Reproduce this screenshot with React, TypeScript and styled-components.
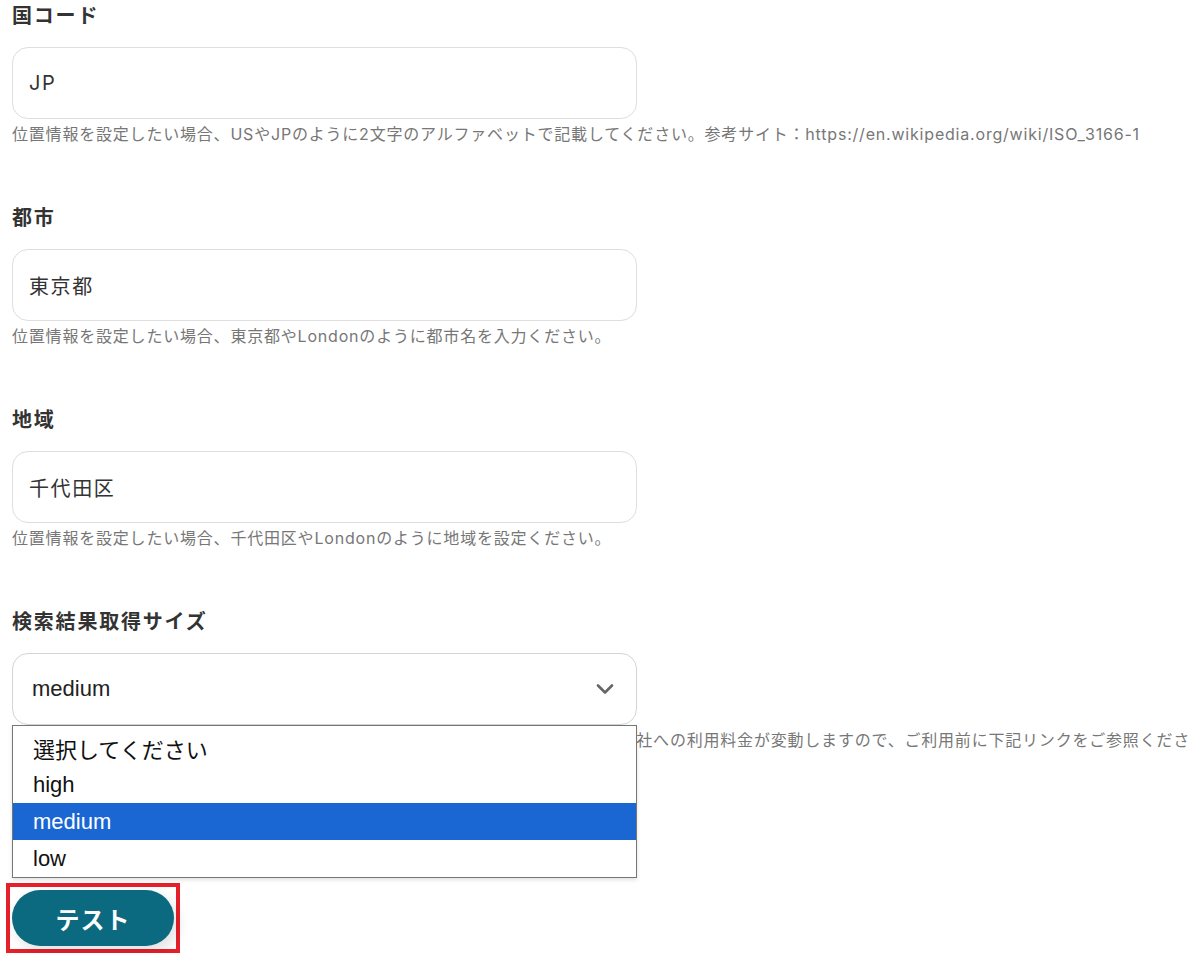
import * as React from 'react';
import styled, { createGlobalStyle } from 'styled-components';

const GlobalStyle = createGlobalStyle`
  html {
    overflow: hidden;
  }
  body {
    margin: 0;
    padding: 0;
    background: #fff;
    font-family: Inter, "Noto Sans CJK JP", sans-serif;
    color: #333;
  }
`;

const Page = styled.div`
  padding: 0 12px;
  width: 1178px;
  box-sizing: border-box;
`;

const Field = styled.div`
  position: relative;
  margin-bottom: 56px;
`;

const Label = styled.div`
  font-size: 20px;
  font-weight: 700;
  line-height: 32px;
  letter-spacing: 1.8px;
  color: #333;
  margin-bottom: 15px;
`;

const TextBox = styled.input`
  display: block;
  box-sizing: border-box;
  width: 625px;
  height: 72px;
  padding: 0 16px;
  border: 1px solid #dedede;
  border-radius: 16px;
  font-family: Inter, "Noto Sans CJK JP", sans-serif;
  font-size: 20px;
  letter-spacing: 1.6px;
  color: #333;
  background: #fff;

  &:focus {
    outline: none;
  }
`;

const Help = styled.div`
  margin-top: 3px;
  font-size: 16px;
  line-height: 24px;
  letter-spacing: 0.8px;
  color: #777;
  white-space: nowrap;
`;

const Brand = styled.span`
  letter-spacing: 0.2px;
`;

const SelectBox = styled.div`
  box-sizing: border-box;
  width: 625px;
  height: 72px;
  padding: 0 22px 0 19px;
  border: 1px solid #d4d4d4;
  border-radius: 16px;
  display: flex;
  align-items: center;
  justify-content: space-between;
  font-family: "Liberation Sans", Arial, "Noto Sans CJK JP", sans-serif;
  font-size: 22px;
  color: #222;
`;

// open option list of the size select, dropped over the help line
const Listbox = styled.ul`
  position: absolute;
  left: 0;
  top: 119px;
  z-index: 2;
  width: 625px;
  margin: 0;
  padding: 3px 0 0;
  list-style: none;
  box-sizing: border-box;
  border: 1px solid #767676;
  background: #fff;
  box-shadow: 0 2px 4px rgba(0, 0, 0, 0.12);
  font-family: "Liberation Sans", Arial, "Noto Sans CJK JP", sans-serif;
  font-size: 22px;
`;

const Option = styled.li<{ $selected?: boolean }>`
  height: 37px;
  display: flex;
  align-items: center;
  padding: 0 20px;
  color: ${(p) => (p.$selected ? '#fff' : '#111')};
  background: ${(p) => (p.$selected ? '#1a67d3' : 'transparent')};
`;

const Highlight = styled.div`
  display: inline-block;
  margin-left: -6px;
  margin-top: 75px;
  padding: 3px 2px;
  border: 4px solid #e6202b;
`;

const TestButton = styled.button`
  display: block;
  width: 162px;
  height: 56px;
  border: none;
  border-radius: 28px;
  background: #0c6a80;
  color: #fff;
  font-family: Inter, "Noto Sans CJK JP", sans-serif;
  font-size: 24px;
  font-weight: 700;
  letter-spacing: 1px;
  box-shadow: 4px 6px 14px rgba(0, 0, 0, 0.12);
  cursor: pointer;
`;

const Chevron = () => (
  <svg width="18" height="12" viewBox="0 0 18 12" fill="none">
    <path d="M2 2.5l7 7 7-7" stroke="#666" strokeWidth="2.6" strokeLinecap="round" strokeLinejoin="round" />
  </svg>
);

const sizeOptions = ['選択してください', 'high', 'medium', 'low'];

export default function App() {
  return (
    <Page>
      <GlobalStyle />
      <Field>
        <Label>国コード</Label>
        <TextBox defaultValue="JP" />
        <Help>位置情報を設定したい場合、USやJPのように2文字のアルファベットで記載してください。参考サイト：https://en.wikipedia.org/wiki/ISO_3166-1</Help>
      </Field>
      <Field>
        <Label>都市</Label>
        <TextBox defaultValue="東京都" />
        <Help>位置情報を設定したい場合、東京都やLondonのように都市名を入力ください。</Help>
      </Field>
      <Field>
        <Label>地域</Label>
        <TextBox defaultValue="千代田区" />
        <Help>位置情報を設定したい場合、千代田区やLondonのように地域を設定ください。</Help>
      </Field>
      <Field>
        <Label>検索結果取得サイズ</Label>
        <SelectBox>
          <span>medium</span>
          <Chevron />
        </SelectBox>
        <Help>※検索結果取得サイズの設定によって検索結果の取得件数が大きく変わり、<Brand>SerpApi</Brand>社への利用料金が変動しますので、ご利用前に下記リンクをご参照ください。</Help>
        <Listbox>
          {sizeOptions.map((o) => (
            <Option key={o} $selected={o === 'medium'}>{o}</Option>
          ))}
        </Listbox>
      </Field>
      <Highlight>
        <TestButton>テスト</TestButton>
      </Highlight>
    </Page>
  );
}
